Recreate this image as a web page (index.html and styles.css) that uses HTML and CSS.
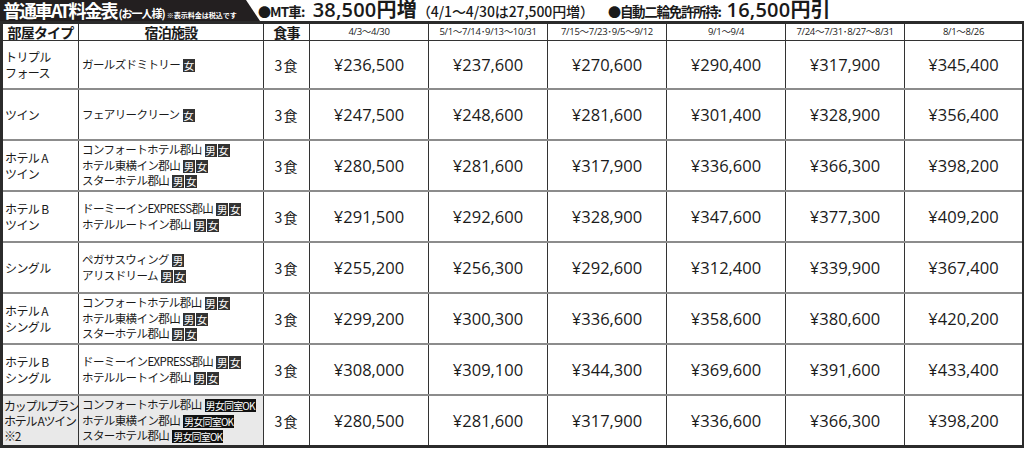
FILE: index.html
```html
<!DOCTYPE html>
<html lang="ja">
<head>
<meta charset="utf-8">
<link rel="stylesheet" href="styles.css">
</head>
<body>
<div class="topbar">
  <div class="title"><span class="t-main">普通車AT料金表</span><span class="t-sub">(お一人様)</span><span class="t-note">※表示料金は税込です</span></div>
  <div class="info"><span class="dot">●</span><span class="i-lbl">MT車:</span><span class="i-big">38,500円増</span><span class="i-par">（4/1～4/30は27,500円増）</span></div>
  <div class="info second"><span class="dot">●</span><span class="i-lbl">自動二輪免許所持:</span><span class="i-big">16,500円引</span></div>
</div>
<table class="price">
  <colgroup>
    <col class="c1"><col class="c2"><col class="c3">
    <col class="cp"><col class="cp"><col class="cp"><col class="cp"><col class="cp"><col class="cp">
  </colgroup>
  <thead>
    <tr>
      <th class="hb">部屋タイプ</th><th class="hb">宿泊施設</th><th class="hb">食事</th>
      <th class="hd">4/3～4/30</th><th class="hd">5/1～7/14･9/13～10/31</th><th class="hd">7/15～7/23･9/5～9/12</th>
      <th class="hd">9/1～9/4</th><th class="hd">7/24～7/31･8/27～8/31</th><th class="hd">8/1～8/26</th>
    </tr>
  </thead>
  <tbody>
    <tr class="r1">
      <td class="type">トリプル<br>フォース</td>
      <td class="hotel">ガールズドミトリー <span class="b">女</span></td>
      <td class="meal">3食</td>
      <td class="p">¥236,500</td><td class="p">¥237,600</td><td class="p">¥270,600</td><td class="p">¥290,400</td><td class="p">¥317,900</td><td class="p">¥345,400</td>
    </tr>
    <tr>
      <td class="type">ツイン</td>
      <td class="hotel">フェアリークリーン <span class="b">女</span></td>
      <td class="meal">3食</td>
      <td class="p">¥247,500</td><td class="p">¥248,600</td><td class="p">¥281,600</td><td class="p">¥301,400</td><td class="p">¥328,900</td><td class="p">¥356,400</td>
    </tr>
    <tr>
      <td class="type">ホテル A<br>ツイン</td>
      <td class="hotel">コンフォートホテル郡山 <span class="b">男</span><span class="b">女</span><br>ホテル東横イン郡山 <span class="b">男</span><span class="b">女</span><br>スターホテル郡山 <span class="b">男</span><span class="b">女</span></td>
      <td class="meal">3食</td>
      <td class="p">¥280,500</td><td class="p">¥281,600</td><td class="p">¥317,900</td><td class="p">¥336,600</td><td class="p">¥366,300</td><td class="p">¥398,200</td>
    </tr>
    <tr>
      <td class="type">ホテル B<br>ツイン</td>
      <td class="hotel">ドーミーインEXPRESS郡山 <span class="b">男</span><span class="b">女</span><br>ホテルルートイン郡山 <span class="b">男</span><span class="b">女</span></td>
      <td class="meal">3食</td>
      <td class="p">¥291,500</td><td class="p">¥292,600</td><td class="p">¥328,900</td><td class="p">¥347,600</td><td class="p">¥377,300</td><td class="p">¥409,200</td>
    </tr>
    <tr>
      <td class="type">シングル</td>
      <td class="hotel">ペガサスウィング <span class="b">男</span><br>アリスドリーム <span class="b">男</span><span class="b">女</span></td>
      <td class="meal">3食</td>
      <td class="p">¥255,200</td><td class="p">¥256,300</td><td class="p">¥292,600</td><td class="p">¥312,400</td><td class="p">¥339,900</td><td class="p">¥367,400</td>
    </tr>
    <tr>
      <td class="type">ホテル A<br>シングル</td>
      <td class="hotel">コンフォートホテル郡山 <span class="b">男</span><span class="b">女</span><br>ホテル東横イン郡山 <span class="b">男</span><span class="b">女</span><br>スターホテル郡山 <span class="b">男</span><span class="b">女</span></td>
      <td class="meal">3食</td>
      <td class="p">¥299,200</td><td class="p">¥300,300</td><td class="p">¥336,600</td><td class="p">¥358,600</td><td class="p">¥380,600</td><td class="p">¥420,200</td>
    </tr>
    <tr>
      <td class="type">ホテル B<br>シングル</td>
      <td class="hotel">ドーミーインEXPRESS郡山 <span class="b">男</span><span class="b">女</span><br>ホテルルートイン郡山 <span class="b">男</span><span class="b">女</span></td>
      <td class="meal">3食</td>
      <td class="p">¥308,000</td><td class="p">¥309,100</td><td class="p">¥344,300</td><td class="p">¥369,600</td><td class="p">¥391,600</td><td class="p">¥433,400</td>
    </tr>
    <tr class="couple">
      <td class="type gray">カップルプラン<br>ホテル Aツイン<br>※2</td>
      <td class="hotel gray">コンフォートホテル郡山 <span class="ok">男女同室OK</span><br>ホテル東横イン郡山 <span class="ok">男女同室OK</span><br>スターホテル郡山 <span class="ok">男女同室OK</span></td>
      <td class="meal">3食</td>
      <td class="p">¥280,500</td><td class="p">¥281,600</td><td class="p">¥317,900</td><td class="p">¥336,600</td><td class="p">¥366,300</td><td class="p">¥398,200</td>
    </tr>
  </tbody>
</table>
</body>
</html>
```

FILE: styles.css
```css
html, body {
  margin: 0;
  padding: 0;
  background: #fff;
}
body {
  width: 1024px;
  font-family: "Open Sans", "Noto Sans CJK JP", sans-serif;
  color: #1a1a1a;
}
.topbar {
  display: flex;
  align-items: center;
  height: 21px;
  white-space: nowrap;
}
.title {
  width: 262px;
  height: 21px;
  background: #231f20;
  color: #fff;
  clip-path: polygon(0 0, 246px 0, 260px 21px, 0 21px);
  display: flex;
  align-items: baseline;
  padding: 1px 0 0 3px;
  box-sizing: border-box;
  font-family: "Noto Sans CJK JP", sans-serif;
  line-height: 19px;
  flex: none;
}
.t-main {
  font-size: 18px;
  font-weight: 700;
  letter-spacing: -2px;
  margin-right: 2px;
}
.t-sub {
  font-size: 11px;
  font-weight: 700;
  letter-spacing: -1px;
}
.t-note {
  font-size: 7px;
  font-weight: 700;
  margin-left: 2px;
}
.info {
  display: flex;
  align-items: baseline;
  font-family: "Noto Sans CJK JP", sans-serif;
  font-weight: 700;
  line-height: 20px;
  margin-left: -4px;
}
.info.second {
  margin-left: 14px;
}
.dot {
  font-size: 13px;
  letter-spacing: -1px;
}
.i-lbl {
  font-size: 13.5px;
  letter-spacing: -0.8px;
  margin-right: 8px;
}
.second .i-lbl {
  letter-spacing: -1.3px;
  margin-right: 6px;
}
.i-big {
  font-family: "Open Sans", "Noto Sans CJK JP", sans-serif;
  font-size: 20px;
  font-weight: 600;
  letter-spacing: 0.2px;
}
.i-par {
  font-size: 14px;
  font-weight: 500;
  letter-spacing: -0.1px;
}
.price {
  border-collapse: collapse;
  table-layout: fixed;
  width: 1022px;
  border: 3px solid #2b2b2b;
}
.c1 { width: 77px; }
.c2 { width: 185px; }
.c3 { width: 46px; }
.cp { width: 119px; }
th, td {
  border-left: 1px solid #333;
  border-right: 1px solid #333;
  padding: 0;
}
th {
  height: 16px;
  border-bottom: 1px solid #333;
  font-weight: 400;
  line-height: 16px;
}
th.hb {
  font-family: "Noto Sans CJK JP", sans-serif;
  font-size: 14px;
  font-weight: 700;
  letter-spacing: -0.8px;
}
th.hd {
  font-family: "Open Sans", "Noto Sans CJK JP", sans-serif;
  font-size: 9.5px;
  letter-spacing: -0.3px;
}
td {
  height: 49px;
  border-bottom: 2px solid #8c8c8c;
  vertical-align: middle;
}
tr.r1 td { height: 47px; }
tr.couple td { border-bottom: 0; }
.type {
  font-family: "Noto Sans CJK JP", sans-serif;
  font-size: 12px;
  line-height: 16px;
  padding-left: 2px;
  letter-spacing: -0.6px;
  white-space: nowrap;
  overflow: hidden;
}
.couple .type {
  line-height: 15px;
  letter-spacing: -1.3px;
  padding-left: 1px;
}
.hotel {
  font-family: "Noto Sans CJK JP", sans-serif;
  font-size: 11.5px;
  line-height: 15.5px;
  padding-left: 3px;
  letter-spacing: -0.6px;
  white-space: nowrap;
  overflow: hidden;
}
.gray { background: #e9e9e9; }
.b {
  display: inline-block;
  width: 12px;
  height: 13px;
  line-height: 13px;
  background: #333;
  color: #fff;
  font-size: 10.5px;
  text-align: center;
  margin-left: 1px;
  letter-spacing: 0;
  vertical-align: -1px;
}
.ok {
  display: inline-block;
  height: 13px;
  line-height: 13px;
  background: #111;
  color: #fff;
  font-size: 10px;
  padding: 0 1px;
  margin-left: 1px;
  letter-spacing: -0.8px;
  vertical-align: -1px;
}
.meal {
  font-family: "Noto Sans CJK JP", sans-serif;
  font-size: 14px;
  letter-spacing: 1px;
  text-align: center;
}
.p {
  font-size: 16.5px;
  text-align: center;
  letter-spacing: 0;
}
```
